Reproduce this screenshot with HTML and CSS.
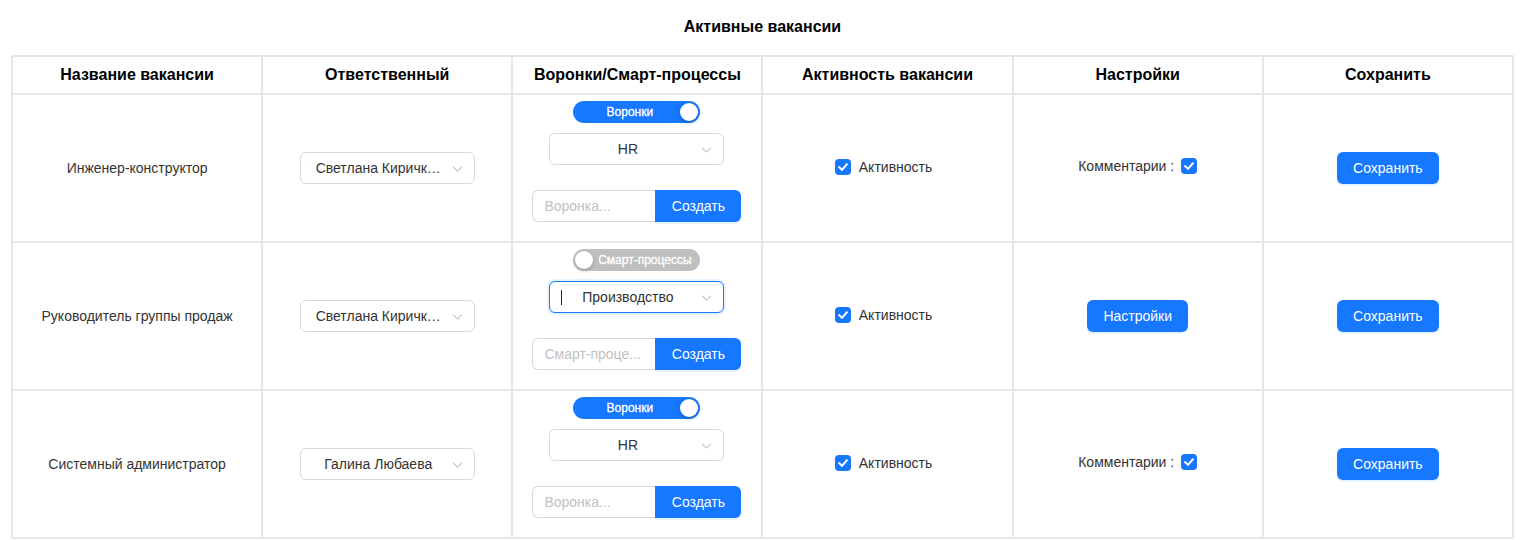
FILE: index.html
```html
<!DOCTYPE html>
<html lang="ru">
<head>
<meta charset="utf-8">
<title>Активные вакансии</title>
<link rel="stylesheet" href="styles.css">
</head>
<body>
<div class="page">
  <h1 class="title">Активные вакансии</h1>
  <table class="grid">
    <thead>
      <tr>
        <th>Название вакансии</th>
        <th>Ответственный</th>
        <th>Воронки/Смарт-процессы</th>
        <th>Активность вакансии</th>
        <th>Настройки</th>
        <th>Сохранить</th>
      </tr>
    </thead>
    <tbody>
      <tr>
        <td>Инженер-конструктор</td>
        <td>
          <div class="select name-select"><span class="sel-text">Светлана Киричк…</span><svg class="chev" viewBox="0 0 12 7"><path d="M1 1 L6 6 L11 1"/></svg></div>
        </td>
        <td class="funnel">
          <div class="stack">
            <div class="switch on"><span class="sw-label">Воронки</span><span class="knob"></span></div>
            <div class="select funnel-select"><span class="sel-text">HR</span><svg class="chev" viewBox="0 0 12 7"><path d="M1 1 L6 6 L11 1"/></svg></div>
            <div class="group"><span class="ph">Воронка...</span><span class="btn-create">Создать</span></div>
          </div>
        </td>
        <td><label class="check"><span class="box"><svg viewBox="0 0 16 16"><path d="M4.2 8.2 L7 10.8 L11.8 5.4"/></svg></span>Активность</label></td>
        <td><div class="comments">Комментарии :<span class="box"><svg viewBox="0 0 16 16"><path d="M4.2 8.2 L7 10.8 L11.8 5.4"/></svg></span></div></td>
        <td><span class="btn">Сохранить</span></td>
      </tr>
      <tr>
        <td>Руководитель группы продаж</td>
        <td>
          <div class="select name-select"><span class="sel-text">Светлана Киричк…</span><svg class="chev" viewBox="0 0 12 7"><path d="M1 1 L6 6 L11 1"/></svg></div>
        </td>
        <td class="funnel">
          <div class="stack">
            <div class="switch off"><span class="knob"></span><span class="sw-label">Смарт-процессы</span></div>
            <div class="select funnel-select focused"><span class="caret"></span><span class="sel-text">Производство</span><svg class="chev" viewBox="0 0 12 7"><path d="M1 1 L6 6 L11 1"/></svg></div>
            <div class="group"><span class="ph">Смарт-проце...</span><span class="btn-create">Создать</span></div>
          </div>
        </td>
        <td><label class="check"><span class="box"><svg viewBox="0 0 16 16"><path d="M4.2 8.2 L7 10.8 L11.8 5.4"/></svg></span>Активность</label></td>
        <td><span class="btn">Настройки</span></td>
        <td><span class="btn">Сохранить</span></td>
      </tr>
      <tr>
        <td>Системный администратор</td>
        <td>
          <div class="select name-select"><span class="sel-text">Галина Любаева</span><svg class="chev" viewBox="0 0 12 7"><path d="M1 1 L6 6 L11 1"/></svg></div>
        </td>
        <td class="funnel">
          <div class="stack">
            <div class="switch on"><span class="sw-label">Воронки</span><span class="knob"></span></div>
            <div class="select funnel-select"><span class="sel-text">HR</span><svg class="chev" viewBox="0 0 12 7"><path d="M1 1 L6 6 L11 1"/></svg></div>
            <div class="group"><span class="ph">Воронка...</span><span class="btn-create">Создать</span></div>
          </div>
        </td>
        <td><label class="check"><span class="box"><svg viewBox="0 0 16 16"><path d="M4.2 8.2 L7 10.8 L11.8 5.4"/></svg></span>Активность</label></td>
        <td><div class="comments">Комментарии :<span class="box"><svg viewBox="0 0 16 16"><path d="M4.2 8.2 L7 10.8 L11.8 5.4"/></svg></span></div></td>
        <td><span class="btn">Сохранить</span></td>
      </tr>
    </tbody>
  </table>
</div>
</body>
</html>
```
FILE: styles.css
```css
* { box-sizing: border-box; }
html, body { margin: 0; padding: 0; background: #fff; }
body {
  font-family: "Liberation Sans", Arial, sans-serif;
  font-size: 14px;
  color: #333;
  overflow: hidden;
}
.page { padding: 0 6px 0 11px; }
.title {
  margin: 0;
  height: 55px;
  padding-top: 17px;
  font-size: 16px;
  line-height: 20px;
  font-weight: bold;
  color: #000;
  text-align: center;
}
.grid {
  width: 1503px;
  table-layout: fixed;
  border-collapse: collapse;
}
.grid th, .grid td {
  border: 2px solid #e6e6e6;
  text-align: center;
  vertical-align: middle;
  padding: 0;
}
.grid th {
  height: 38px;
  font-size: 16px;
  font-weight: bold;
  color: #000;
}
.grid td {
  height: 148px;
  color: #333;
}
.grid td.funnel { vertical-align: top; }

.stack {
  display: flex;
  flex-direction: column;
  align-items: center;
  padding: 6px 1px 0 0;
}

.select {
  position: relative;
  display: inline-flex;
  align-items: center;
  height: 32px;
  border: 1px solid #d9d9d9;
  border-radius: 6px;
  background: #fff;
  color: #333;
  padding: 0 29px 0 11px;
}
.name-select { width: 175px; }
.funnel-select { width: 175px; margin-top: 10px; }
.sel-text {
  flex: 1;
  text-align: center;
  white-space: nowrap;
  overflow: hidden;
  text-overflow: ellipsis;
  line-height: 30px;
}
.chev {
  position: absolute;
  right: 11px;
  top: 13px;
  width: 11px;
  height: 6px;
  fill: none;
  stroke: #bfbfbf;
  stroke-width: 1.2;
}
.select.focused {
  border-color: #1677ff;
  box-shadow: 0 0 0 2px rgba(5, 145, 255, 0.1);
}
.caret {
  position: absolute;
  left: 11px;
  top: 8px;
  width: 1px;
  height: 15px;
  background: #222;
}

.switch {
  display: flex;
  align-items: center;
  width: 127px;
  height: 22px;
  border-radius: 11px;
  padding: 2px;
  color: #fff;
  font-size: 12px;
  font-weight: normal;
  -webkit-text-stroke: 0.3px #fff;
}
.switch.on { background: #1677ff; }
.switch.off { background: #bfbfbf; }
.knob {
  width: 18px;
  height: 18px;
  border-radius: 50%;
  background: #fff;
  box-shadow: 0 2px 4px rgba(0, 35, 11, 0.2);
  flex: none;
}
.sw-label {
  flex: 1;
  text-align: center;
  line-height: 18px;
  white-space: nowrap;
}
.switch.on .sw-label { padding-left: 4px; }
.switch.off .sw-label { padding-right: 2px; }

.group {
  display: flex;
  width: 209px;
  height: 32px;
  margin-top: 25px;
}
.ph {
  width: 123px;
  border: 1px solid #d9d9d9;
  border-right: none;
  border-radius: 6px 0 0 6px;
  color: #bfbfbf;
  text-align: left;
  padding: 0 11px;
  line-height: 30px;
  white-space: nowrap;
  overflow: hidden;
}
.btn-create {
  width: 86px;
  background: #1677ff;
  color: #fff;
  border-radius: 0 6px 6px 0;
  line-height: 32px;
  text-align: center;
  box-shadow: 0 2px 0 rgba(5, 145, 255, 0.1);
}

.check {
  display: inline-flex;
  align-items: center;
  gap: 8px;
  padding-right: 8px;
  color: #333;
}
.box {
  display: inline-block;
  width: 16px;
  height: 16px;
  border-radius: 4px;
  background: #1677ff;
}
.box svg {
  width: 16px;
  height: 16px;
  display: block;
  fill: none;
  stroke: #fff;
  stroke-width: 2;
  stroke-linecap: square;
}
.comments {
  display: inline-flex;
  align-items: center;
  gap: 7px;
  color: #333;
  position: relative;
  top: -2px;
}

.btn {
  display: inline-block;
  height: 32px;
  line-height: 32px;
  padding: 0 16px;
  border-radius: 6px;
  background: #1677ff;
  color: #fff;
  font-size: 14px;
  box-shadow: 0 2px 0 rgba(5, 145, 255, 0.1);
}
```
